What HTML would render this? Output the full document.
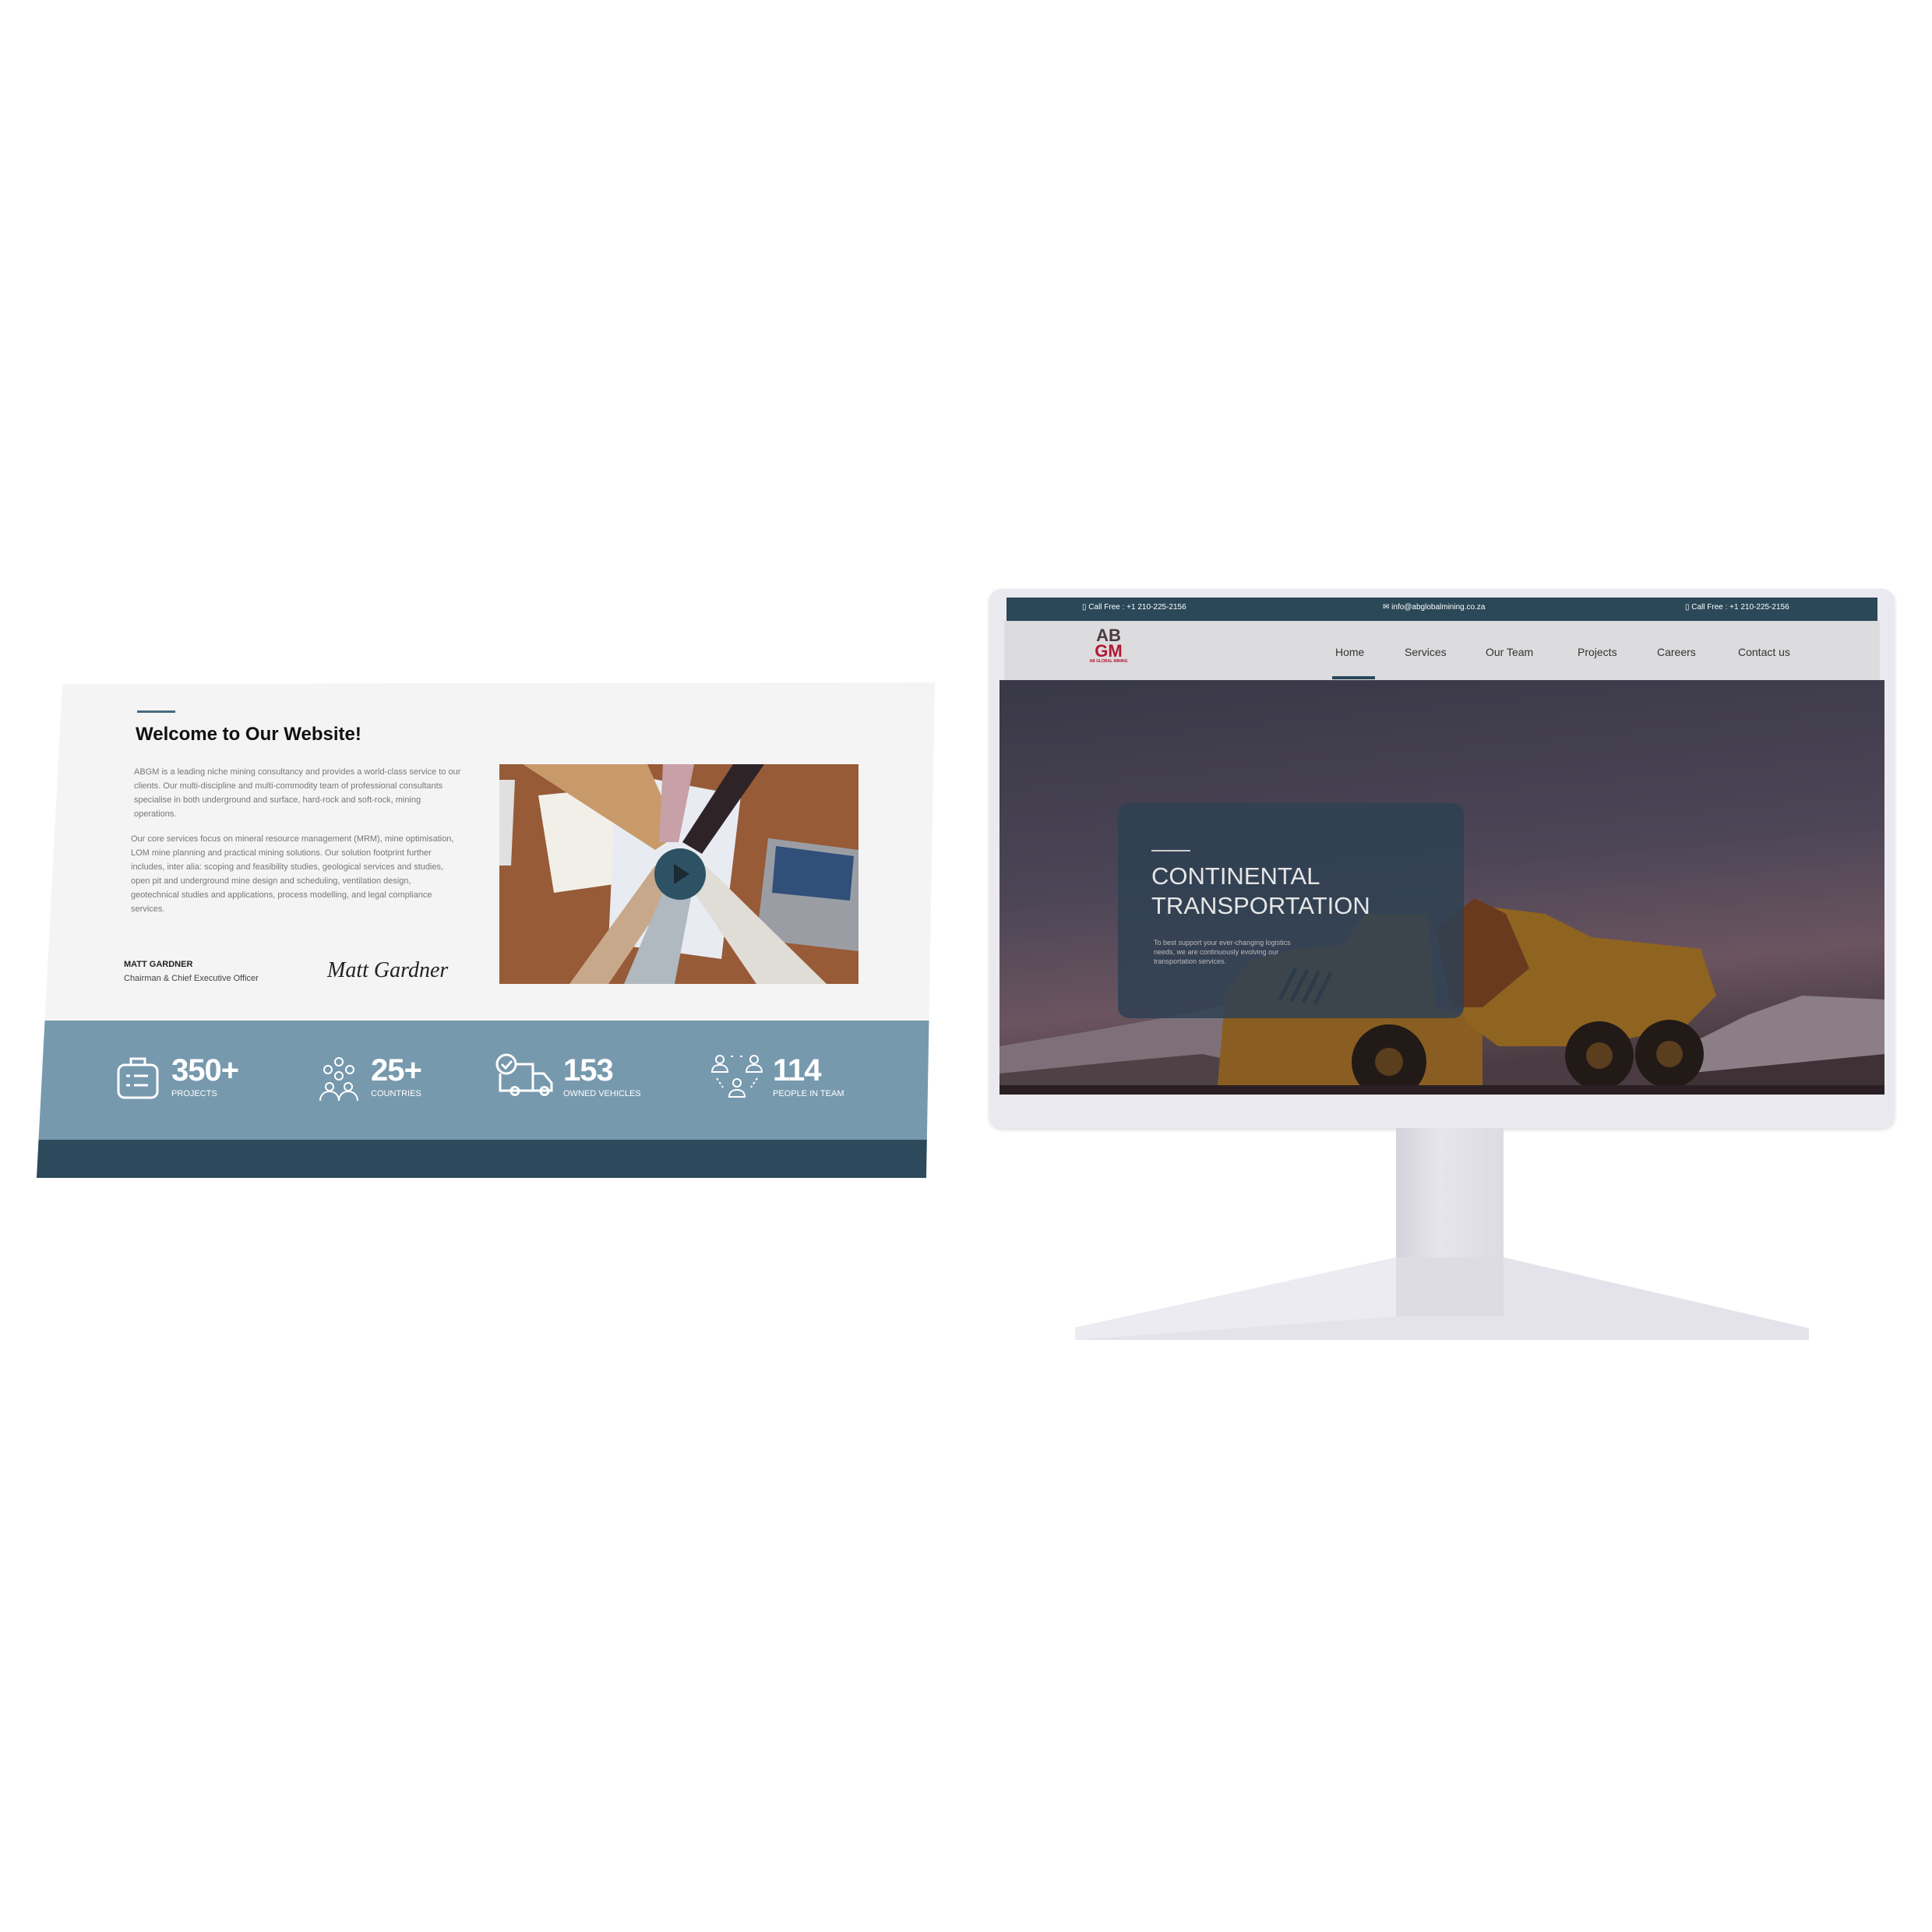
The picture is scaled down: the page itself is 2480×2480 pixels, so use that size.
<!DOCTYPE html>
<html><head><meta charset="utf-8"><style>
*{margin:0;padding:0;box-sizing:border-box}
body{width:2480px;height:2480px;background:#fff;position:relative;overflow:hidden;font-family:"Liberation Sans",sans-serif}
.a{position:absolute}
#card{left:0;top:0;width:2480px;height:2480px;clip-path:polygon(80px 878px,1200px 876px,1189px 1512px,47px 1512px)}
.p{font-size:11px;line-height:18px;color:#777;width:420px}
.num{color:#fff;font-weight:bold;font-size:40px;letter-spacing:-1px}
.lab{color:#fff;font-size:11px}
.nav{font-size:14px;color:#333;top:829px}
.tb{font-size:10px;color:#fff;top:774px}
</style></head><body>
<div id="card" class="a">
 <div class="a" style="left:0;top:876px;width:1240px;height:436px;background:#f4f4f4"></div>
 <div class="a" style="left:0;top:1310px;width:1240px;height:154px;background:#7799ae"></div>
 <div class="a" style="left:0;top:1463px;width:1240px;height:50px;background:#2d4a5c"></div>
</div>
<div class="a" style="left:176px;top:912px;width:49px;height:3px;background:#4a6a80"></div>
<div class="a" style="left:174px;top:929px;font-size:24px;font-weight:bold;color:#111">Welcome to Our Website!</div>
<div class="a p" style="left:172px;top:982px">ABGM is a leading niche mining consultancy and provides a world-class service to our clients. Our multi-discipline and multi-commodity team of professional consultants specialise in both underground and surface, hard-rock and soft-rock, mining operations.</div>
<div class="a p" style="left:168px;top:1068px">Our core services focus on mineral resource management (MRM), mine optimisation, LOM mine planning and practical mining solutions. Our solution footprint further includes, inter alia: scoping and feasibility studies, geological services and studies, open pit and underground mine design and scheduling, ventilation design, geotechnical studies and applications, process modelling, and legal compliance services.</div>
<div class="a" style="left:159px;top:1232px;font-size:11px;font-weight:bold;color:#222">MATT GARDNER</div>
<div class="a" style="left:159px;top:1250px;font-size:11px;color:#444">Chairman &amp; Chief Executive Officer</div>
<div class="a" style="left:420px;top:1230px;font-family:'Liberation Serif',serif;font-style:italic;font-size:28px;color:#222">Matt Gardner</div>
<svg class="a" style="left:641px;top:981px" width="461" height="282" viewBox="0 0 461 282">
 <rect width="461" height="282" fill="#8e5434"/>
 <rect x="0" y="0" width="461" height="282" fill="#a4663e" opacity=".4"/>
 <polygon points="50,40 150,30 175,150 70,165" fill="#f1efe8"/>
 <polygon points="150,10 310,40 285,250 140,230" fill="#e8ecf2"/>
 <polygon points="345,95 461,110 461,240 330,225" fill="#9a9ea4"/>
 <polygon points="355,105 455,118 450,175 350,165" fill="#30507a"/>
 <polygon points="0,20 20,20 15,130 0,130" fill="#e0e0e0"/>
 <path d="M30 0 L190 0 L230 90 L200 110 Z" fill="#c89a6a"/>
 <path d="M210 0 L250 0 L230 100 L205 100 Z" fill="#c8a0a8"/>
 <path d="M300 0 L340 0 L260 115 L235 100 Z" fill="#2e2428"/>
 <path d="M90 282 L200 130 L230 150 L140 282 Z" fill="#c8a88a"/>
 <path d="M160 282 L220 140 L250 150 L225 282 Z" fill="#b0b8c0"/>
 <path d="M330 282 L240 150 L265 130 L420 282 Z" fill="#e0dcd6"/>
 <circle cx="232" cy="141" r="33" fill="#2d5264"/>
 <polygon points="224,128 224,154 244,141" fill="#1b2a33"/>
</svg>
<svg class="a" style="left:148px;top:1355px" width="60" height="60" viewBox="0 0 60 60" fill="none" stroke="#fff" stroke-width="3"><rect x="4" y="12" width="50" height="42" rx="8"/><path d="M20 12V4h18v8M14 26h5M24 26h18M14 38h5M24 38h18"/></svg>
<div class="a num" style="left:220px;top:1352px">350+</div><div class="a lab" style="left:220px;top:1398px">PROJECTS</div>
<svg class="a" style="left:405px;top:1355px" width="60" height="60" viewBox="0 0 60 60" fill="none" stroke="#fff" stroke-width="2"><circle cx="30" cy="8" r="5"/><circle cx="16" cy="18" r="5"/><circle cx="44" cy="18" r="5"/><circle cx="30" cy="26" r="5"/><circle cx="18" cy="40" r="5"/><circle cx="42" cy="40" r="5"/><path d="M6 58c0-8 6-12 12-12s12 4 12 12M30 58c0-8 6-12 12-12s12 4 12 12"/></svg>
<div class="a num" style="left:476px;top:1352px">25+</div><div class="a lab" style="left:476px;top:1398px">COUNTRIES</div>
<svg class="a" style="left:634px;top:1352px" width="78" height="60" viewBox="0 0 78 60" fill="none" stroke="#fff" stroke-width="3"><circle cx="16" cy="14" r="12"/><path d="M10 14l5 5 8-9M28 14h22v34H8V26M50 26h14l10 12v10H50M22 48a5 5 0 1 1 0 1M60 48a5 5 0 1 1 0 1"/></svg>
<div class="a num" style="left:723px;top:1352px">153</div><div class="a lab" style="left:723px;top:1398px">OWNED VEHICLES</div>
<svg class="a" style="left:912px;top:1352px" width="68" height="60" viewBox="0 0 68 60" fill="none" stroke="#fff" stroke-width="2"><circle cx="12" cy="8" r="5"/><path d="M2 24c0-6 4-9 10-9s10 3 10 9z"/><circle cx="56" cy="8" r="5"/><path d="M46 24c0-6 4-9 10-9s10 3 10 9z"/><circle cx="34" cy="38" r="5"/><path d="M24 56c0-6 4-9 10-9s10 3 10 9z"/><path d="M26 4h4M38 4h4M8 32l8 12M60 32l-8 12" stroke-dasharray="3 3"/></svg>
<div class="a num" style="left:992px;top:1352px">114</div><div class="a lab" style="left:992px;top:1398px">PEOPLE IN TEAM</div>

<div class="a" style="left:1270px;top:756px;width:1162px;height:692px;background:#ebe9f0;border-radius:16px;box-shadow:0 2px 6px rgba(0,0,0,.15)"></div>
<div class="a" style="left:1792px;top:1448px;width:138px;height:170px;background:linear-gradient(90deg,#d4d2da,#e6e4ec 40%,#dcdae2)"></div>
<svg class="a" style="left:1370px;top:1600px" width="960" height="130" viewBox="0 0 960 130"><polygon points="422,14 560,14 952,105 952,120 10,120 10,104" fill="#e4e2ea"/><polygon points="422,14 560,14 560,90 422,90" fill="#dddbe3"/><polygon points="10,104 422,14 422,90 10,120" fill="#ecebf2"/></svg>
<div class="a" style="left:1292px;top:767px;width:1118px;height:31px;background:#2a4858"></div>
<div class="a tb" style="left:1389px">▯ Call Free : +1 210-225-2156</div>
<div class="a tb" style="left:1775px">✉ info@abglobalmining.co.za</div>
<div class="a tb" style="left:2163px">▯ Call Free : +1 210-225-2156</div>
<div class="a" style="left:1289px;top:797px;width:1124px;height:77px;background:#dcdbdd"></div>
<div class="a" style="left:1398px;top:806px;width:50px;text-align:center;line-height:20px;font-weight:bold;font-size:22px">
<div style="color:#4a3a40">AB</div><div style="color:#b01830">GM</div><div style="font-size:5px;line-height:6px;color:#b01830">AB GLOBAL MINING</div></div>
<div class="a nav" style="left:1714px">Home</div>
<div class="a nav" style="left:1803px">Services</div>
<div class="a nav" style="left:1907px">Our Team</div>
<div class="a nav" style="left:2025px">Projects</div>
<div class="a nav" style="left:2127px">Careers</div>
<div class="a nav" style="left:2231px">Contact us</div>
<div class="a" style="left:1710px;top:868px;width:55px;height:4px;background:#2a4858"></div>
<svg class="a" style="left:1283px;top:873px" width="1136" height="532" viewBox="0 0 1136 532">
 <defs><linearGradient id="sky" x1="0" y1="0" x2="0.2" y2="1"><stop offset="0" stop-color="#393847"/><stop offset=".5" stop-color="#4b4556"/><stop offset=".8" stop-color="#6b5460"/><stop offset="1" stop-color="#4a3c42"/></linearGradient></defs>
 <rect width="1136" height="532" fill="url(#sky)"/>
 <path d="M0 470 L120 450 L230 430 L320 410 L330 532 L0 532Z" fill="#7e7078"/>
 <path d="M0 505 L150 490 L260 480 L330 495 L330 532 L0 532Z" fill="#4e4246"/>
 <path d="M880 470 L960 430 L1030 405 L1136 410 L1136 532 L880 532Z" fill="#8c7e86"/>
 <path d="M880 505 L1136 480 L1136 532 L880 532Z" fill="#3e3236"/>
 <polygon points="290,400 320,360 380,345 440,340 470,300 550,300 560,420 620,430 620,520 280,520" fill="#8a5e22"/>
 <polygon points="560,330 620,290 700,300 760,330 900,345 920,405 880,445 760,470 640,470 600,440" fill="#8f6420"/>
 <polygon points="560,320 610,280 650,300 680,370 620,420 580,420" fill="#6a3a1e"/>
 <g fill="none" stroke="#2a201a" stroke-width="5"><path d="M360 410l20-40M375 412l20-40M390 414l20-40M405 416l20-40"/></g>
 <circle cx="500" cy="490" r="48" fill="#221a16"/><circle cx="500" cy="490" r="18" fill="#5a3e1e"/>
 <circle cx="770" cy="482" r="44" fill="#221a16"/><circle cx="770" cy="482" r="17" fill="#5a3e1e"/>
 <circle cx="860" cy="480" r="44" fill="#221a16"/><circle cx="860" cy="480" r="17" fill="#5a3e1e"/>
 <rect x="0" y="520" width="1136" height="12" fill="#2a2024"/>
 <rect x="152" y="158" width="444" height="276" rx="14" fill="#2e4152" opacity=".85"/>
 <rect x="195" y="218" width="50" height="2" fill="#ccc"/>
 <text x="195" y="262" fill="#e6e6e6" font-family="Liberation Sans" font-size="31">CONTINENTAL</text>
 <text x="195" y="300" fill="#e6e6e6" font-family="Liberation Sans" font-size="31">TRANSPORTATION</text>
 <text font-family="Liberation Sans" font-size="9" fill="#bbb"><tspan x="198" y="340">To best support your ever-changing logistics</tspan><tspan x="198" y="352">needs, we are continuously evolving our</tspan><tspan x="198" y="364">transportation services.</tspan></text>
</svg>
</body></html>
